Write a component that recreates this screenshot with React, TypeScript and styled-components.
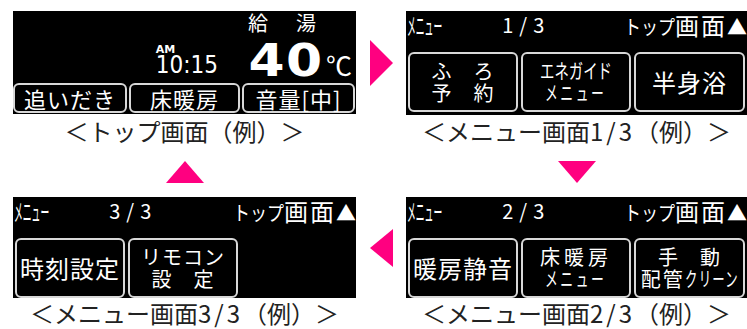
import React from "react";
import styled, { createGlobalStyle } from "styled-components";

const GlobalStyle = createGlobalStyle`
  html, body {
    margin: 0;
    background: #fff;
  }
`;

const JP = `"Noto Sans CJK JP", "Noto Sans", sans-serif`;
const PINK = "#ff0080";

const Page = styled.div`
  display: grid;
  grid-template-columns: 343px 50px 341px;
  grid-template-rows: 133px 53px 132px;
  width: 747px;
  height: 329px;
  box-sizing: border-box;
  padding: 11px 0 0 13px;
  overflow: hidden;
`;

const Panel = styled.div`
  display: flex;
  flex-direction: column;
`;

const Screen = styled.div<{ $h: number }>`
  height: ${(p) => p.$h}px;
  flex: none;
  background: #000;
  color: #fff;
  font-family: ${JP};
  display: flex;
  flex-direction: column;
  overflow: hidden;
`;

const Caption = styled.div<{ $pad: number }>`
  padding-top: ${(p) => p.$pad}px;
  text-align: center;
  font-family: ${JP};
  font-size: 24px;
  line-height: 26px;
  color: #222;
  white-space: nowrap;
`;

const Num = styled.span`
  letter-spacing: 3px;
`;

// condensed LCD-style glyphs: full-width text squeezed horizontally
const Narrow = styled.span<{ $s: number; $w: number; $sy?: number }>`
  display: inline-block;
  transform: scale(${(p) => p.$s}, ${(p) => p.$sy ?? 1});
  transform-origin: left center;
  margin-right: ${(p) => -(1 - p.$s) * p.$w}px;
`;

const ArrowCell = styled.div<{ $h?: number; $align: string; $pad?: number }>`
  height: ${(p) => (p.$h ? `${p.$h}px` : "auto")};
  display: flex;
  justify-content: ${(p) => p.$align};
  align-items: ${(p) => (p.$pad ? "flex-start" : "center")};
  padding-top: ${(p) => p.$pad || 0}px;
  padding-left: ${(p) => (p.$align === "flex-start" ? 14 : 0)}px;
`;

type Dir = "up" | "down" | "left" | "right";

const Arrow = styled.div<{ $dir: Dir }>`
  width: 0;
  height: 0;
  ${(p) =>
    p.$dir === "right"
      ? `border-left: 23px solid ${PINK}; border-top: 23px solid transparent; border-bottom: 23px solid transparent;`
      : p.$dir === "left"
      ? `border-right: 23px solid ${PINK}; border-top: 19px solid transparent; border-bottom: 19px solid transparent;`
      : p.$dir === "up"
      ? `border-bottom: 22px solid ${PINK}; border-left: 19px solid transparent; border-right: 19px solid transparent;`
      : `border-top: 22px solid ${PINK}; border-left: 19px solid transparent; border-right: 19px solid transparent;`}
`;

/* top screen */
const TopInfo = styled.div`
  height: 72px;
  flex: none;
  display: flex;
  justify-content: flex-end;
  align-items: flex-end;
  padding-right: 4px;
`;

const Clock = styled.div`
  display: flex;
  flex-direction: column;
  margin-right: 30px;
  padding-bottom: 7px;
`;

const Ampm = styled.div`
  font-family: "DejaVu Sans", sans-serif;
  font-size: 11px;
  line-height: 11px;
  font-weight: bold;
`;

const Time = styled.div`
  font-family: "DejaVu Sans Condensed", "DejaVu Sans", sans-serif;
  font-size: 24px;
  line-height: 21px;
`;

const Temp = styled.div`
  display: flex;
  flex-direction: column;
  width: 104px;
  height: 72px;
`;

const TempLabel = styled.div`
  font-size: 20px;
  line-height: 24px;
  letter-spacing: 4px;
`;

const TempValue = styled.div`
  display: flex;
  justify-content: flex-end;
  align-items: flex-end;
  height: 46px;
`;

const Big = styled.span`
  display: inline-block;
  font-family: "DejaVu Sans", sans-serif;
  font-weight: bold;
  font-size: 44px;
  line-height: 40px;
  letter-spacing: 1px;
  transform: scaleX(1.18);
  transform-origin: right center;
  margin-right: 3px;
`;

const Unit = styled.span`
  font-size: 26px;
  line-height: 26px;
  margin-bottom: 3px;
`;

const TabRow = styled.div`
  display: grid;
  grid-template-columns: 114px 111px 113px;
  gap: 2px;
  height: 30px;
  flex: none;
`;

const Tab = styled.div`
  border: 2px solid #d8d8d8;
  border-radius: 6px;
  display: flex;
  align-items: center;
  justify-content: center;
  font-size: 22px;
  line-height: 1;
  letter-spacing: 1px;
  white-space: nowrap;
`;

/* menu screens */
const MenuHeader = styled.div`
  height: 41px;
  flex: none;
  display: flex;
  justify-content: space-between;
  align-items: flex-start;
  padding-top: 1px;
  box-sizing: border-box;
  white-space: nowrap;
  font-size: 20px;
  line-height: 26px;
`;

const HeadLeft = styled.span`
  padding-left: 1px;
`;

const PageNo = styled.span`
  margin-left: 60px;
  letter-spacing: 6px;
`;

const HeadRight = styled.span``;

const HeadStrong = styled.span`
  font-size: 24px;
  letter-spacing: 2px;
`;

const MenuGrid = styled.div`
  display: grid;
  grid-template-columns: 110px 110px 111px;
  gap: 3px;
  padding-left: 2px;
  height: 60px;
  flex: none;
`;

const MenuButton = styled.div`
  border: 2px solid #d8d8d8;
  border-radius: 6px;
  display: flex;
  flex-direction: column;
  align-items: center;
  justify-content: center;
  white-space: nowrap;
`;

const Single = styled.div`
  font-size: 24px;
  line-height: 28px;
  letter-spacing: 1px;
`;

const Line = styled.div<{ $ls?: number }>`
  font-size: 20px;
  line-height: 22px;
  letter-spacing: ${(p) => p.$ls ?? 0}px;
`;

type Item = { lines: [React.ReactNode, number?][] } | { single: string };

const MenuScreen = ({ page, items, h }: { page: string; items: Item[]; h: number }) => (
  <Screen $h={h}>
    <MenuHeader>
      <HeadLeft>
        <Narrow $s={0.44} $w={80} $sy={1.2}>メニュー</Narrow>
        <PageNo>{page}</PageNo>
      </HeadLeft>
      <HeadRight>
        <Narrow $s={0.85} $w={60}>トップ</Narrow>
        <HeadStrong>画面</HeadStrong>▲
      </HeadRight>
    </MenuHeader>
    <MenuGrid>
      {items.map((it, i) => (
        <MenuButton key={i}>
          {"single" in it ? (
            <Single>{it.single}</Single>
          ) : (
            it.lines.map(([t, ls], j) => (
              <Line key={j} $ls={ls}>
                {t}
              </Line>
            ))
          )}
        </MenuButton>
      ))}
    </MenuGrid>
  </Screen>
);

const MenuWord = () => (
  <Narrow $s={0.64} $w={96}>メニュー</Narrow>
);

export default function App() {
  return (
    <>
      <GlobalStyle />
      <Page>
        <Panel>
          <Screen $h={103}>
            <TopInfo>
              <Clock>
                <Ampm>AM</Ampm>
                <Time>10:15</Time>
              </Clock>
              <Temp>
                <TempLabel>給　湯</TempLabel>
                <TempValue>
                  <Big>40</Big>
                  <Unit>℃</Unit>
                </TempValue>
              </Temp>
            </TopInfo>
            <TabRow>
              <Tab>追いだき</Tab>
              <Tab>床暖房</Tab>
              <Tab>音量[中]</Tab>
            </TabRow>
          </Screen>
          <Caption $pad={4}>＜トップ画面（例）＞</Caption>
        </Panel>

        <ArrowCell $h={103} $align="flex-start">
          <Arrow $dir="right" />
        </ArrowCell>

        <Panel>
          <MenuScreen
            h={104}
            page="1/3"
            items={[
              { lines: [["ふ　ろ", 1], ["予　約", 1]] },
              {
                lines: [
                  [<Narrow $s={0.72} $w={100}>エネガイド</Narrow>, 0],
                  [<MenuWord />, 4],
                ],
              },
              { single: "半身浴" },
            ]}
          />
          <Caption $pad={3}>
            ＜メニュー画面<Num>1/3</Num>（例）＞
          </Caption>
        </Panel>

        <ArrowCell $align="center" $pad={17}>
          <Arrow $dir="up" />
        </ArrowCell>
        <div />
        <ArrowCell $align="center" $pad={17}>
          <Arrow $dir="down" />
        </ArrowCell>

        <Panel>
          <MenuScreen
            h={101}
            page="3/3"
            items={[
              { single: "時刻設定" },
              { lines: [["リモコン", 1], ["設　定", 1]] },
            ]}
          />
          <Caption $pad={2}>
            ＜メニュー画面<Num>3/3</Num>（例）＞
          </Caption>
        </Panel>

        <ArrowCell $h={101} $align="flex-start">
          <Arrow $dir="left" />
        </ArrowCell>

        <Panel>
          <MenuScreen
            h={101}
            page="2/3"
            items={[
              { single: "暖房静音" },
              { lines: [["床暖房", 4], [<MenuWord />, 4]] },
              {
                lines: [
                  ["手　動", 1],
                  [
                    <>
                      配管<Narrow $s={0.62} $w={88}>クリーン</Narrow>
                    </>,
                    2,
                  ],
                ],
              },
            ]}
          />
          <Caption $pad={2}>
            ＜メニュー画面<Num>2/3</Num>（例）＞
          </Caption>
        </Panel>
      </Page>
    </>
  );
}
